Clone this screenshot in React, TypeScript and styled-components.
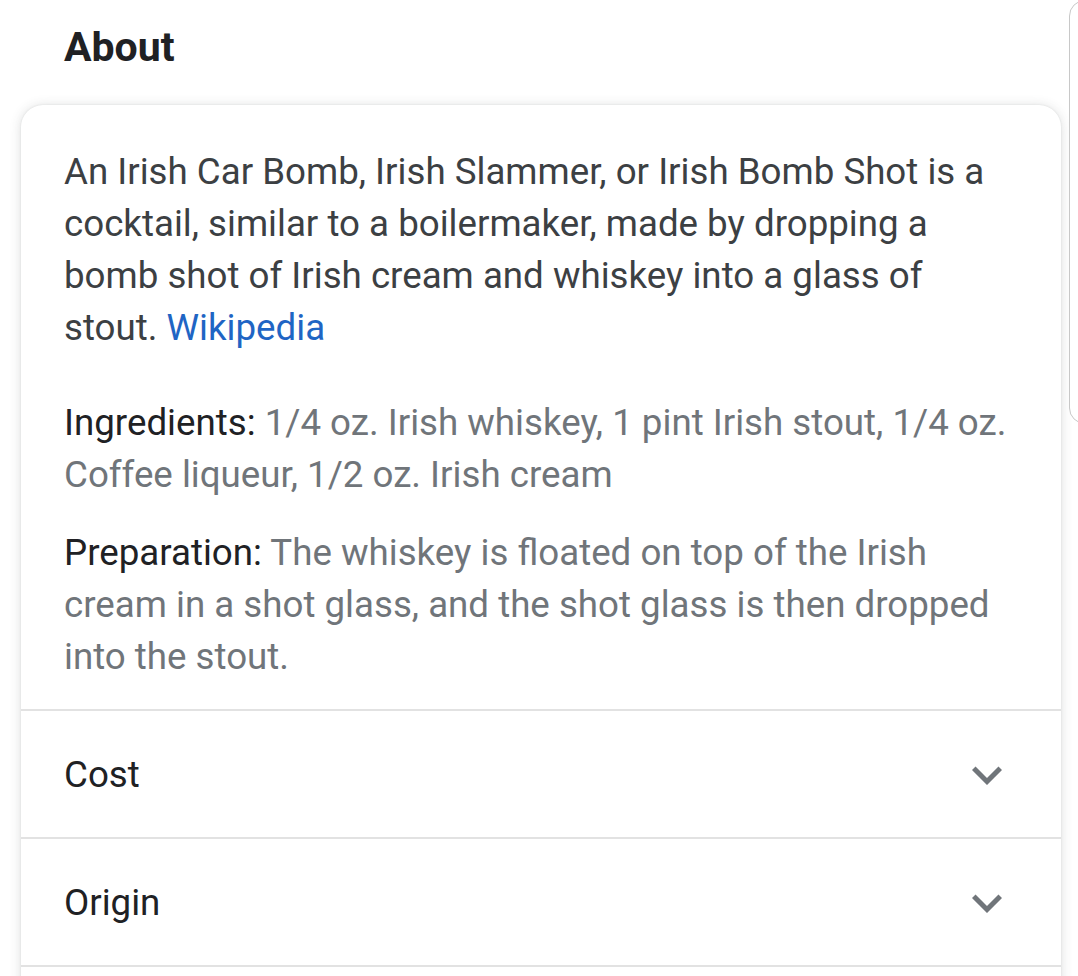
import React from "react";
import styled, { createGlobalStyle } from "styled-components";

const Global = createGlobalStyle`
  html, body { margin: 0; padding: 0; background: #fff; overflow: hidden; }
  body { font-family: Roboto, "Noto Sans", Arial, sans-serif; -webkit-font-smoothing: antialiased; }
`;

const Page = styled.div`
  display: flex;
  align-items: flex-start;
  width: 1078px;
  height: 976px;
  overflow: hidden;
`;

const Column = styled.div`
  flex: 0 0 1069px;
  display: flex;
  flex-direction: column;
`;

const Title = styled.h2`
  margin: 0;
  padding: 22px 0 0 64px;
  height: 105px;
  box-sizing: border-box;
  font-size: 41px;
  line-height: 50px;
  font-weight: 700;
  color: #202124;
`;

const Card = styled.div`
  margin-left: 21px;
  width: 1040px;
  background: #fff;
  border-radius: 22px 22px 0 0;
  box-shadow: 0 1px 12px rgba(60, 64, 67, 0.18), 0 0 2px rgba(60, 64, 67, 0.12);
  display: flex;
  flex-direction: column;
`;

const Body = styled.div`
  padding: 41px 40px 26px 43px;
  display: flex;
  flex-direction: column;
`;

const Para = styled.p<{ $gap?: number }>`
  margin: 0;
  margin-top: ${(p) => p.$gap ?? 0}px;
  font-size: 36.7px;
  line-height: 52px;
  color: #3c4043;
`;

const Label = styled.span`
  color: #202124;
`;

const Value = styled.span`
  color: #70757a;
`;

const Link = styled.a`
  color: #1f65c4;
  text-decoration: none;
`;

const Row = styled.div`
  height: 126px;
  border-top: 2px solid #e2e2e2;
  display: flex;
  align-items: center;
  justify-content: space-between;
  padding: 0 59px 0 43px;
  font-size: 36.7px;
  color: #202124;
`;

const Side = styled.div`
  flex: 0 0 200px;
  height: 424px;
  box-sizing: border-box;
  border: 1px solid #c8c8c8;
  border-radius: 16px;
  background: #fff;
`;

const Chevron = () => (
  <svg width="30" height="30" viewBox="6 4 12 12" fill="#70757a" aria-hidden>
    <path d="M16.59 8.59L12 13.17 7.41 8.59 6 10l6 6 6-6z" transform="translate(0 -1.6)" />
  </svg>
);

export default function App() {
  return (
    <>
      <Global />
      <Page>
        <Column>
          <Title>About</Title>
          <Card>
            <Body>
              <Para>
                An Irish Car Bomb, Irish Slammer, or Irish Bomb Shot is a cocktail, similar to a
                boilermaker, made by dropping a bomb shot of Irish cream and whiskey into a glass of
                stout. <Link href="#">Wikipedia</Link>
              </Para>
              <Para $gap={43}>
                <Label>Ingredients: </Label>
                <Value>1/4 oz. Irish whiskey, 1 pint Irish stout, 1/4 oz. Coffee liqueur, 1/2 oz. Irish cream</Value>
              </Para>
              <Para $gap={26}>
                <Label>Preparation: </Label>
                <Value>
                  The whiskey is floated on top of the Irish cream in a shot glass, and the shot glass
                  is then dropped into the stout.
                </Value>
              </Para>
            </Body>
            <Row>
              Cost
              <Chevron />
            </Row>
            <Row>
              Origin
              <Chevron />
            </Row>
            <Row />
          </Card>
        </Column>
        <Side />
      </Page>
    </>
  );
}
